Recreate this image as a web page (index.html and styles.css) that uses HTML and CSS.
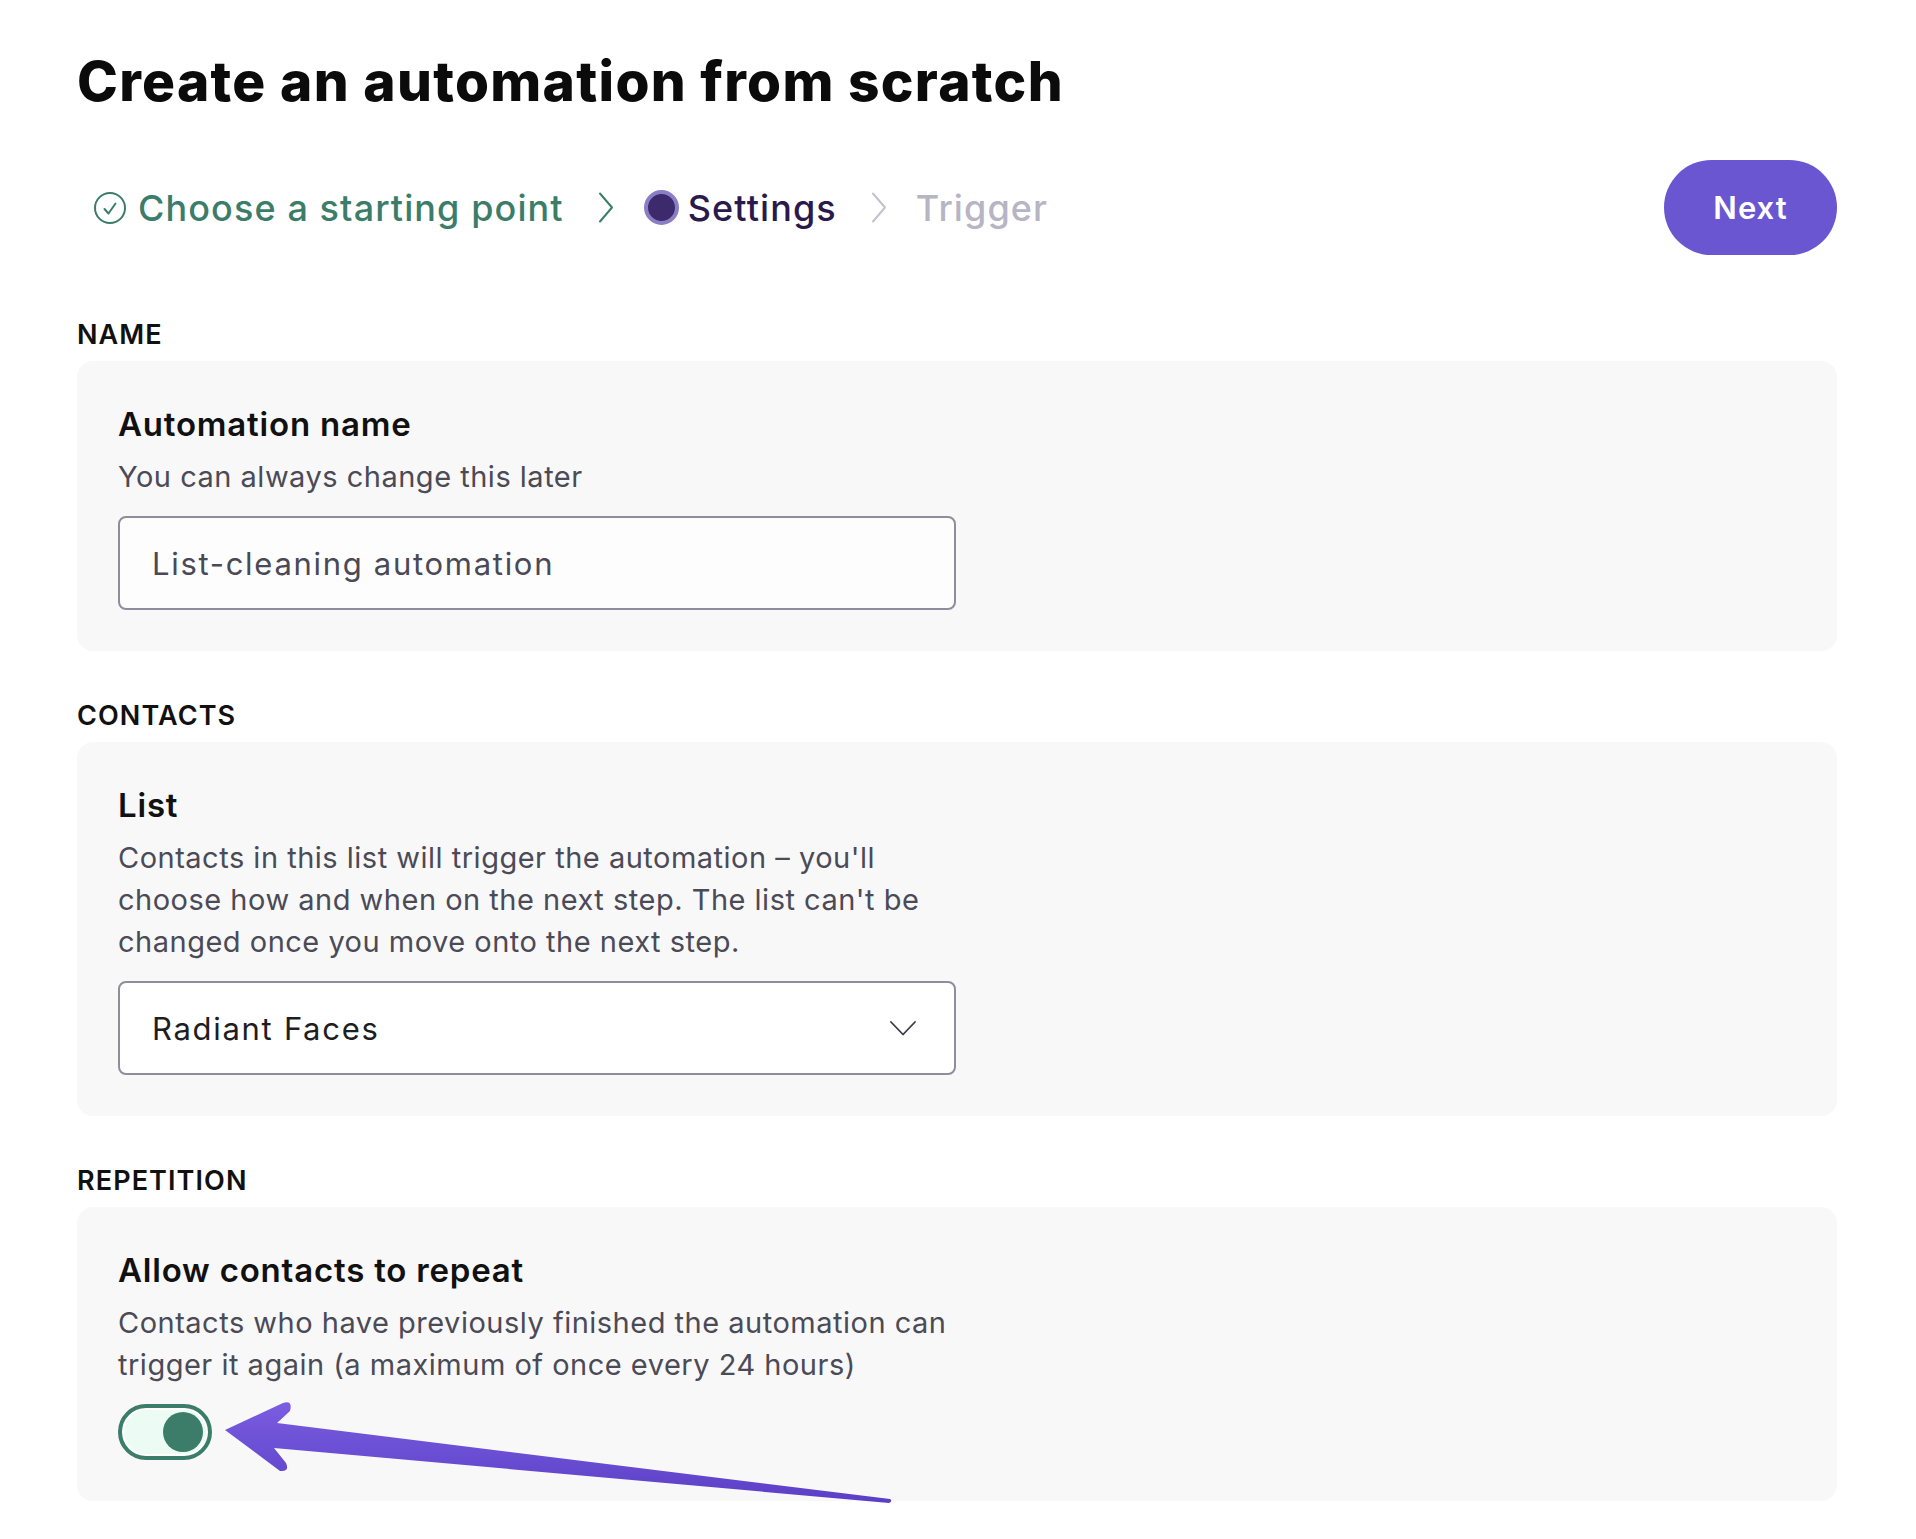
FILE: index.html
```html
<!DOCTYPE html>
<html lang="en">
<head>
<meta charset="utf-8">
<title>Create an automation from scratch</title>
<link rel="stylesheet" href="styles.css">
</head>
<body>
<div class="page">
  <h1 class="title">Create an automation from scratch</h1>

  <div class="header-row">
    <nav class="steps">
      <div class="step step-done">
        <svg class="step-icon" width="32" height="32" viewBox="0 0 32 32" aria-hidden="true">
          <circle cx="16" cy="16" r="15" fill="none" stroke="#3b7d69" stroke-width="2"/>
          <polyline points="10.5,17 14.5,21.5 21.5,11.5" fill="none" stroke="#3b7d69" stroke-width="2" stroke-linecap="round" stroke-linejoin="round"/>
        </svg>
        <span>Choose a starting point</span>
      </div>
      <svg class="sep sep-done" width="16" height="31" viewBox="0 0 16 31" aria-hidden="true">
        <polyline points="2,1.5 14,15.5 2,29.5" fill="none" stroke-width="2" stroke-linecap="round" stroke-linejoin="round"/>
      </svg>
      <div class="step step-current">
        <span class="dot"></span>
        <span>Settings</span>
      </div>
      <svg class="sep sep-todo" width="16" height="31" viewBox="0 0 16 31" aria-hidden="true">
        <polyline points="2,1.5 14,15.5 2,29.5" fill="none" stroke-width="2" stroke-linecap="round" stroke-linejoin="round"/>
      </svg>
      <div class="step step-todo">
        <span>Trigger</span>
      </div>
    </nav>
    <button class="btn-next" type="button">Next</button>
  </div>

  <section class="section">
    <h2 class="section-label">NAME</h2>
    <div class="card">
      <h3 class="field-title">Automation name</h3>
      <p class="field-desc">You can always change this later</p>
      <div class="input">List-cleaning automation</div>
    </div>
  </section>

  <section class="section">
    <h2 class="section-label">CONTACTS</h2>
    <div class="card">
      <h3 class="field-title">List</h3>
      <p class="field-desc">Contacts in this list will trigger the automation – you'll<br>choose how and when on the next step. The list can't be<br>changed once you move onto the next step.</p>
      <div class="input select">
        <span>Radiant Faces</span>
        <svg class="select-chev" width="26" height="15" viewBox="0 0 26 15" aria-hidden="true">
          <polyline points="1,1 13,13.5 25,1" fill="none" stroke="#3a3a44" stroke-width="1.8" stroke-linecap="round" stroke-linejoin="round"/>
        </svg>
      </div>
    </div>
  </section>

  <section class="section">
    <h2 class="section-label">REPETITION</h2>
    <div class="card card-annotated">
      <h3 class="field-title">Allow contacts to repeat</h3>
      <p class="field-desc">Contacts who have previously finished the automation can<br>trigger it again (a maximum of once every 24 hours)</p>
      <div class="toggle" role="switch" aria-checked="true"><span class="knob"></span></div>
      <svg class="arrow" width="830" height="310" viewBox="0 0 830 310" aria-hidden="true">
        <defs>
          <linearGradient id="arrowGrad" x1="0" y1="0" x2="0" y2="1">
            <stop offset="0" stop-color="#7a5de0"/>
            <stop offset="1" stop-color="#5a3fc6"/>
          </linearGradient>
        </defs>
        <path d="M148,223 L206,196 Q216,193 213,204 L200,216 L813,292 Q816,294 812,296 L197,241 L209,256 Q213,265 203,264 Z" fill="url(#arrowGrad)"/>
      </svg>
    </div>
  </section>
</div>
</body>
</html>
```

FILE: styles.css
```css
* {
  box-sizing: border-box;
}

html, body {
  margin: 0;
  padding: 0;
  background: #ffffff;
}

body {
  font-family: Inter, "Open Sans", sans-serif;
  color: #111111;
}

.page {
  padding: 0 79px 60px 77px;
}

.title {
  margin: 53px 0 0;
  font-family: Inter, "Liberation Sans", sans-serif;
  font-weight: 800;
  font-size: 55px;
  line-height: 56px;
  letter-spacing: 1.3px;
  color: #0b0b0b;
}

.header-row {
  margin-top: 51px;
  display: flex;
  align-items: center;
  justify-content: space-between;
}

.steps {
  display: flex;
  align-items: center;
  padding-left: 17px;
  font-size: 36px;
  font-weight: 500;
  letter-spacing: 1.1px;
}

.step {
  display: flex;
  align-items: center;
  gap: 12px;
}

.step-done { color: #3b7d69; }
.step-current { color: #2a1a4c; gap: 9px; }
.step-todo { color: #b7b4c4; }

.sep { margin: 0 30px 0 34px; }
.sep-done polyline { stroke: #3b7d69; }
.sep-todo polyline { stroke: #c4c1cf; }
.sep-todo { margin: 0 29px 0 34px; }

.dot {
  width: 35px;
  height: 35px;
  border-radius: 50%;
  background: #3c2a6c;
  border: 4px solid #8a7fc6;
}

.btn-next {
  width: 173px;
  height: 95px;
  border: 0;
  border-radius: 48px;
  background: #6a56d0;
  color: #ffffff;
  font-family: Inter, sans-serif;
  font-size: 31px;
  font-weight: 600;
  letter-spacing: 1px;
  padding: 0;
}

.section-label {
  margin: 63px 0 9px;
  font-size: 27px;
  line-height: 34px;
  font-weight: 600;
  letter-spacing: 1.1px;
  color: #111111;
}

.section + .section .section-label {
  margin-top: 48px;
}

.card {
  background: #f8f8f8;
  border-radius: 16px;
  padding: 43px 41px 41px;
}

.card-annotated {
  position: relative;
}

.field-title {
  margin: 0;
  font-size: 33px;
  line-height: 40px;
  font-weight: 600;
  letter-spacing: 0.8px;
  color: #111111;
}

.field-desc {
  margin: 12px 0 18px;
  font-size: 29px;
  line-height: 42px;
  font-weight: 400;
  letter-spacing: 0.5px;
  color: #4b4a57;
}

.input {
  width: 838px;
  height: 94px;
  border: 2px solid #8f8d9c;
  border-radius: 8px;
  background: #fdfdfd;
  padding: 0 38px 0 32px;
  display: flex;
  align-items: center;
  font-size: 31px;
  letter-spacing: 1.7px;
  color: #4a4957;
}

.select {
  justify-content: space-between;
  background: #ffffff;
  color: #1d1d22;
}

.toggle {
  margin-top: 17px;
  width: 94px;
  height: 56px;
  border-radius: 28px;
  border: 4px solid #3b7d69;
  background: #ecfbf3;
  box-shadow: inset 0 0 0 2px #ffffff;
  display: flex;
  align-items: center;
  justify-content: flex-end;
  padding-right: 5px;
}

.knob {
  width: 40px;
  height: 40px;
  border-radius: 50%;
  background: #3b7d69;
}

.arrow {
  position: absolute;
  left: 0;
  top: 0;
  overflow: visible;
  pointer-events: none;
}
```
